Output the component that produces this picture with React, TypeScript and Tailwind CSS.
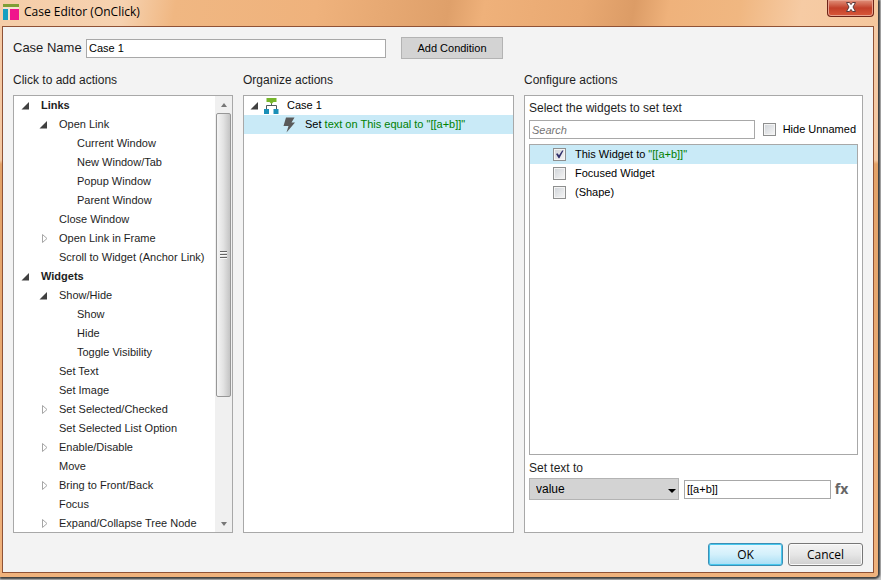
import { useState } from 'react';
import clsx from 'clsx';

interface ActionItem {
  label: string;
  level: 0 | 1 | 2;
  arrow?: 'open' | 'closed';
}

const ACTIONS: ActionItem[] = [
  { label: 'Links', level: 0, arrow: 'open' },
  { label: 'Open Link', level: 1, arrow: 'open' },
  { label: 'Current Window', level: 2 },
  { label: 'New Window/Tab', level: 2 },
  { label: 'Popup Window', level: 2 },
  { label: 'Parent Window', level: 2 },
  { label: 'Close Window', level: 1 },
  { label: 'Open Link in Frame', level: 1, arrow: 'closed' },
  { label: 'Scroll to Widget (Anchor Link)', level: 1 },
  { label: 'Widgets', level: 0, arrow: 'open' },
  { label: 'Show/Hide', level: 1, arrow: 'open' },
  { label: 'Show', level: 2 },
  { label: 'Hide', level: 2 },
  { label: 'Toggle Visibility', level: 2 },
  { label: 'Set Text', level: 1 },
  { label: 'Set Image', level: 1 },
  { label: 'Set Selected/Checked', level: 1, arrow: 'closed' },
  { label: 'Set Selected List Option', level: 1 },
  { label: 'Enable/Disable', level: 1, arrow: 'closed' },
  { label: 'Move', level: 1 },
  { label: 'Bring to Front/Back', level: 1, arrow: 'closed' },
  { label: 'Focus', level: 1 },
  { label: 'Expand/Collapse Tree Node', level: 1, arrow: 'closed' },
];

const LEVEL_PADDING = ['pl-[7px]', 'pl-[25px]', 'pl-[43px]'];

const App = () => {
  const [caseName, setCaseName] = useState('Case 1');
  const [search, setSearch] = useState('');
  const [hideUnnamed, setHideUnnamed] = useState(false);
  const [target, setTarget] = useState('this');
  const [value, setValue] = useState('[[a+b]]');

  return (
    <div className="h-screen min-h-[320px] overflow-hidden bg-[#c4c4c4] pr-[3px] pb-[3px] font-['Liberation_Sans',Arial,sans-serif] text-[#1e1e1e]">
      <div className="flex h-full flex-col rounded-br-sm bg-[linear-gradient(180deg,#f6cba6_0px,#f4c8a2_160px,#e3a268_164px,#f0b27c_100%)] shadow-[1px_1px_2px_1px_#3c3c3c]">
        <TitleBar />

        <main className="mr-[4px] mb-[4px] ml-[2px] flex min-h-0 flex-1 flex-col border border-[#8f5236] bg-[#f3f3f3] px-[10px] pb-[6px]">
          {/* Case name */}
          <div className="flex h-[42px] shrink-0 items-center">
            <label htmlFor="case-name" className="w-[73px] text-[13px] whitespace-nowrap">Case Name</label>
            <input
              id="case-name"
              type="text"
              value={caseName}
              onChange={e => setCaseName(e.target.value)}
              className="h-[19px] w-[300px] border border-[#a8a8a8] bg-white px-[2px] text-[11px] text-black outline-none"
            />
            <button type="button" className="ml-[15px] h-[22px] w-[102px] border border-[#b3b3b3] bg-[#d3d3d3] text-[11px] text-black">
              Add Condition
            </button>
          </div>

          {/* Three columns */}
          <div className="grid min-h-0 flex-1 grid-cols-[220px_271fr_339fr] gap-[10px]">
            <Column title="Click to add actions">
              <div className="flex h-full">
                <ul className="min-w-0 flex-1 overflow-hidden">
                  {ACTIONS.map(item => (
                    <ActionRow key={item.label} item={item} />
                  ))}
                </ul>
                <ScrollBar />
              </div>
            </Column>

            <Column title="Organize actions">
              <ul className="text-[11px] text-black">
                <li className="flex h-[19px] items-center pl-[6px]">
                  <OpenArrow />
                  <CaseIcon />
                  <span className="ml-[8px]">Case 1</span>
                </li>
                <li className="flex h-[19px] items-center bg-[#c9eaf7] pl-[38px]">
                  <BoltIcon />
                  <span className="ml-[8px] whitespace-nowrap">
                    Set <span className="text-[#008000]">text on This equal to "[[a+b]]"</span>
                  </span>
                </li>
              </ul>
            </Column>

            <Column title="Configure actions">
              <div className="flex h-full flex-col px-[4px]">
                <h3 className="h-[24px] shrink-0 text-[12px] leading-[24px]">Select the widgets to set text</h3>
                <div className="flex shrink-0 items-center">
                  <input
                    type="text"
                    aria-label="Search"
                    placeholder="Search"
                    value={search}
                    onChange={e => setSearch(e.target.value)}
                    className="h-[19px] min-w-0 flex-1 border border-[#a8a8a8] bg-white px-[2px] text-[11px] outline-none placeholder:text-[#757575] placeholder:italic"
                  />
                  <label className="ml-[8px] flex items-center gap-[7px] pr-[2px] text-[11px] text-black">
                    <CheckBox checked={hideUnnamed} onChange={() => setHideUnnamed(!hideUnnamed)} />
                    Hide Unnamed
                  </label>
                </div>

                <div className="mt-[5px] min-h-0 flex-1 border border-[#a8a8a8] bg-white text-[11px] text-black">
                  <WidgetRow checked={target === 'this'} onChange={() => setTarget('this')}>
                    This Widget to <span className="text-[#008000]">"[[a+b]]"</span>
                  </WidgetRow>
                  <WidgetRow checked={target === 'focused'} onChange={() => setTarget('focused')}>
                    Focused Widget
                  </WidgetRow>
                  <WidgetRow checked={target === 'shape'} onChange={() => setTarget('shape')}>
                    (Shape)
                  </WidgetRow>
                </div>

                {/* Value */}
                <label htmlFor="set-text" className="h-[23px] shrink-0 text-[12px] leading-[26px]">Set text to</label>
                <div className="mb-[32px] flex shrink-0 items-center">
                  <div className="relative">
                    <select
                      id="set-text"
                      defaultValue="value"
                      className="block h-[22px] w-[150px] appearance-none border border-[#b3b3b3] bg-[#d3d3d3] pl-[6px] text-[12px] text-black outline-none"
                    >
                      <option value="value">value</option>
                      <option value="rich">rich text</option>
                    </select>
                    <svg width="8" height="4" viewBox="0 0 8 4" className="pointer-events-none absolute right-[3px] bottom-[7px]">
                      <path d="M0 0h8L4 4z" fill="#000" />
                    </svg>
                  </div>
                  <input
                    type="text"
                    aria-label="Value"
                    value={value}
                    onChange={e => setValue(e.target.value)}
                    className="ml-[5px] h-[19px] min-w-0 flex-1 border border-[#a8a8a8] bg-white px-[2px] text-[11px] text-black outline-none"
                  />
                  <button type="button" className="w-[27px] pr-[6px] text-center font-['Open_Sans',sans-serif] text-[14px] leading-[22px] font-bold text-[#666666]">
                    fx
                  </button>
                </div>
              </div>
            </Column>
          </div>

          {/* Footer */}
          <div className="mt-[10px] flex shrink-0 justify-end gap-[5px] font-['Open_Sans',sans-serif] text-[12px] text-black">
            <button type="button" className="h-[23px] w-[75px] rounded-[3px] border border-[#3c8fb5] bg-gradient-to-b from-[#eaf8fe] via-[#d3f0fb] to-[#a8def5] leading-[20px] shadow-[inset_0_0_0_1px_#48c8ee]">
              OK
            </button>
            <button type="button" className="h-[23px] w-[75px] rounded-[3px] border border-[#777777] bg-gradient-to-b from-[#f3f3f3] via-[#e6e6e6] to-[#cfcfcf] leading-[20px] shadow-[inset_0_0_0_1px_#fafafa]">
              Cancel
            </button>
          </div>
        </main>
      </div>
    </div>
  );
};

const TitleBar = () => (
  <header className="flex h-[26px] shrink-0 items-start justify-between bg-[linear-gradient(100deg,#f5cda8_0%,#f6d2b0_14%,#f0b782_20%,#efb27c_36%,#dfa06a_51%,#efb17a_55%,#e9a972_66%,#dc9c66_72%,#efb27b_76%,#f0b781_84%,#f6cba4_91%,#f5c79d_100%)] pr-[4px] pl-[3px]">
    <div className="flex h-[24px] items-center gap-[5px]">
      <svg width="16" height="16" viewBox="0 0 16 16">
        <path d="M0 0h16v3H0z" fill="#7f9f35" />
        <path d="M0 3h16v2H0zM5 5h2v11H5z" fill="#f6e2cf" />
        <path d="M0 5h5v11H0z" fill="#169fc0" />
        <path d="M7 5h9v11H7z" fill="#f0148c" />
      </svg>
      <h1 className="font-['Open_Sans',sans-serif] text-[12px] text-black">Case Editor (OnClick)</h1>
    </div>
    <button
      type="button"
      aria-label="Close"
      className="flex h-[17px] w-[47px] items-center justify-center rounded-b-[4px] border border-t-0 border-[#6e2418] bg-gradient-to-b from-[#e0907a] via-[#c2402a] to-[#d9583a] pb-[2px] shadow-[inset_0_0_0_1px_#e8a28e]"
    >
      <svg width="12" height="10" viewBox="0 0 12 10">
        <path d="M1.500 .5h3L6 2.600 7.500.5h3L8 5l2.500 4.500h-3L6 7.400 4.500 9.500h-3L4 5z" fill="#fff" stroke="#5c3b3b" strokeWidth="1" />
      </svg>
    </button>
  </header>
);

const Column = ({ title, children }: { title: string, children: React.ReactNode }) => (
  <section className="flex min-h-0 min-w-0 flex-col">
    <h2 className="h-[26px] shrink-0 text-[12px] leading-[22px]">{title}</h2>
    <div className="min-h-0 flex-1 overflow-hidden border border-[#a8a8a8] bg-white">{children}</div>
  </section>
);

const ActionRow = ({ item }: { item: ActionItem }) => (
  <li className={clsx('flex h-[19px] items-center text-[11px]', LEVEL_PADDING[item.level])}>
    <span className="w-[20px] shrink-0">
      {item.arrow === 'open' && <OpenArrow />}
      {item.arrow === 'closed' && <ClosedArrow />}
    </span>
    <button type="button" className={clsx('whitespace-nowrap', item.level === 0 && 'font-bold')}>
      {item.label}
    </button>
  </li>
);

const WidgetRow = ({ checked, onChange, children }: { checked: boolean, onChange: () => void, children: React.ReactNode }) => (
  <label className={clsx('flex h-[19px] items-center gap-[9px] pl-[23px]', checked && 'bg-[#c9eaf7]')}>
    <CheckBox checked={checked} onChange={onChange} />
    <span>{children}</span>
  </label>
);

const CheckBox = ({ checked, onChange }: { checked: boolean, onChange: () => void }) => (
  <span className="relative block size-[13px] shrink-0">
    <input
      type="checkbox"
      checked={checked}
      onChange={onChange}
      className="block size-[13px] appearance-none border border-[#8e8f8f] bg-gradient-to-br from-[#cfd3d8] to-[#f6f6f6] shadow-[inset_0_0_0_1px_#f4f4f4]"
    />
    {checked && (
      <svg width="13" height="13" viewBox="0 0 13 13" className="pointer-events-none absolute inset-0">
        <path d="M3 6l1.500-.8L6 7.300 9.200 2.500h1.300L6.400 10.300H5.600z" fill="#2f2f6b" />
      </svg>
    )}
  </span>
);

const ScrollBar = () => (
  <div className="flex w-[17px] shrink-0 flex-col items-center bg-[#f0f0f0]">
    <div className="flex h-[17px] items-center">
      <svg width="6" height="4" viewBox="0 0 6 4">
        <path d="M3 0l3 4H0z" fill="#777" />
      </svg>
    </div>
    <div className="flex w-[15px] flex-[283] flex-col items-center justify-center gap-px rounded-[2px] border border-[#979797] bg-gradient-to-r from-[#f5f5f5] via-[#e2e2e2] to-[#c4c4c4]">
      <span className="h-[2px] w-[7px] border-b border-[#fafafa] bg-[#666666]" />
      <span className="h-[2px] w-[7px] border-b border-[#fafafa] bg-[#666666]" />
      <span className="h-[2px] w-[7px] border-b border-[#fafafa] bg-[#666666]" />
    </div>
    <div className="flex-[119]" />
    <div className="flex h-[17px] items-center">
      <svg width="6" height="4" viewBox="0 0 6 4">
        <path d="M0 0h6L3 4z" fill="#777" />
      </svg>
    </div>
  </div>
);

const OpenArrow = () => (
  <svg width="9" height="9" viewBox="0 0 9 9" className="shrink-0">
    <path d="M8 1v7.500H.5z" fill="#404040" />
  </svg>
);

const ClosedArrow = () => (
  <svg width="9" height="10" viewBox="0 0 9 10" className="ml-[2px]">
    <path d="M1.500 .5v8L6 4.500z" fill="#fff" stroke="#a6a6a6" />
  </svg>
);

const CaseIcon = () => (
  <svg width="15" height="16" viewBox="0 0 15 16" className="ml-[5px] shrink-0">
    <path d="M2.500 11V7.500h10V11M7.500 4v3.500" fill="none" stroke="#4f5a5f" />
    <path d="M2.500 0h10v4H9.500L7.500 6 5.500 4h-3z" fill="#76b62b" />
    <path d="M0 11h5v5H0zM9.500 11h5v5h-5z" fill="#1a90b8" />
  </svg>
);

const BoltIcon = () => (
  <svg width="15" height="16" viewBox="0 0 15 16" className="shrink-0">
    <path d="M4 .5h8.500L9.500 5.500H13L4.500 15.500l2-6.500H1.500z" fill="#5a5a5a" />
  </svg>
);

export default App;
